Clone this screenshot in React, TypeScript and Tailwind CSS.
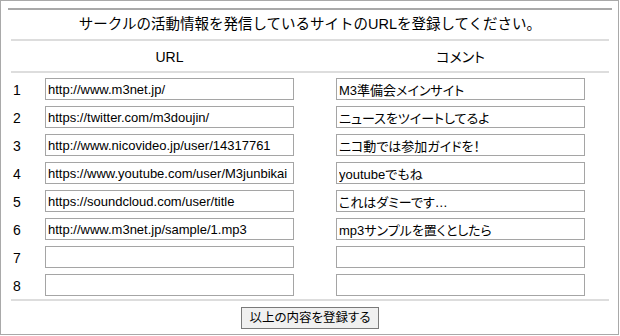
const rows = [
  { url: "http://www.m3net.jp/", comment: "M3準備会メインサイト" },
  { url: "https://twitter.com/m3doujin/", comment: "ニュースをツイートしてるよ" },
  { url: "http://www.nicovideo.jp/user/14317761", comment: "ニコ動では参加ガイドを！" },
  { url: "https://www.youtube.com/user/M3junbikai", comment: "youtubeでもね" },
  { url: "https://soundcloud.com/user/title", comment: "これはダミーです…" },
  { url: "http://www.m3net.jp/sample/1.mp3", comment: "mp3サンプルを置くとしたら" },
  { url: "", comment: "" },
  { url: "", comment: "" },
];

const font = "font-['Liberation_Sans','Noto_Sans_CJK_JP',sans-serif]";

export default function App() {
  return (
    <div className={`h-[335px] w-[619px] border border-[#a9a9a9] bg-white px-[7px] pt-[7px] text-black ${font}`}>
      <div className="w-[604px] border-t-2 border-[#a9a9a9] px-[3px]">
        {/* タイトル */}
        <div className="flex h-[31px] items-center justify-center border-b-2 border-[#dddddd] text-[14.5px]">
          サークルの活動情報を発信しているサイトのURLを登録してください。
        </div>

        {/* 見出し */}
        <div className="grid h-[32px] grid-cols-[34px_249px_42px_249px] items-center border-b-2 border-[#dddddd] pt-[3px] text-[14px]">
          <span />
          <span className="text-center">URL</span>
          <span />
          <span className="text-center [font-feature-settings:'palt']">コメント</span>
        </div>

        {/* 入力欄 */}
        <div className="flex flex-col gap-[6px] border-b-2 border-[#dddddd] pb-[3px] pt-[5px]">
          {rows.map((r, i) => (
            <div key={i} className="grid grid-cols-[34px_249px_42px_249px] items-start">
              <span className="pl-[2px] pt-[3px] text-[14px] leading-[18px]">{i + 1}</span>
              <input
                type="text"
                defaultValue={r.url}
                className="h-[22px] w-[249px] border border-[#a5a5a5] px-[2px] text-[13px] outline-none"
              />
              <span />
              <input
                type="text"
                defaultValue={r.comment}
                className="h-[22px] w-[249px] border border-[#a5a5a5] px-[2px] text-[13px] outline-none [font-feature-settings:'palt']"
              />
            </div>
          ))}
        </div>

        {/* 送信 */}
        <div className="flex justify-center pt-[6px]">
          <button
            type="button"
            className="h-[22px] w-[138px] border border-[#7a7a7a] bg-[#f0f0f0] text-[12.5px] leading-none [font-feature-settings:'palt']"
          >
            以上の内容を登録する
          </button>
        </div>
      </div>
    </div>
  );
}
